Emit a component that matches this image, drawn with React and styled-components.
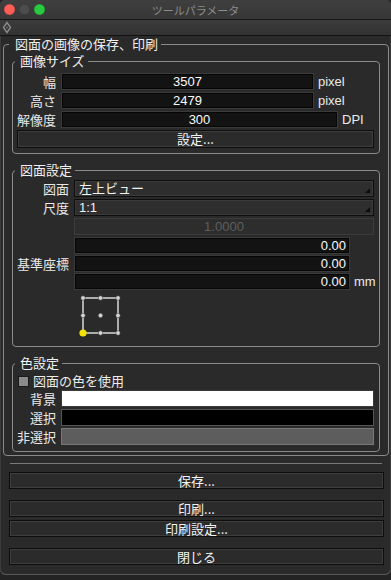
import React from "react";
import styled, { createGlobalStyle } from "styled-components";

const Global = createGlobalStyle`
  html, body { margin: 0; padding: 0; background: #232323; }
  body {
    font-family: "Liberation Sans", "Noto Sans CJK JP", sans-serif;
    font-size: 13px;
    color: #ececec;
  }
  * { box-sizing: border-box; }
`;

const Window = styled.div`
  width: 391px;
  height: 575px;
  background: #2a2a2a;
  border-radius: 5px 5px 6px 6px;
  overflow: hidden;
  display: flex;
  flex-direction: column;
  box-shadow: inset 0 -1px 0 #5a5a5a, inset 1px 0 0 #3a3a3a, inset -1px 0 0 #3a3a3a;
`;

const TitleBar = styled.div`
  height: 20px;
  display: grid;
  grid-template-columns: 1fr auto 1fr;
  align-items: center;
  background: linear-gradient(#3f3f3f, #373737);
  border-bottom: 1px solid #171717;
`;

const Lights = styled.div`
  display: flex;
  gap: 4px;
  padding-left: 4px;
`;

const Light = styled.span`
  width: 11px;
  height: 11px;
  border-radius: 50%;
  background: ${(p) => p.$c};
  box-shadow: inset 0 0 0 0.5px rgba(0, 0, 0, 0.25);
`;

const Title = styled.div`
  font-family: "Noto Sans CJK JP", sans-serif;
  font-size: 11px;
  color: #8d8d8d;
  line-height: 14px;
`;

const ToolStrip = styled.div`
  height: 16px;
  display: flex;
  align-items: center;
  padding-left: 2px;
  background: linear-gradient(#3c3c3c, #323232);
  border-bottom: 1px solid #121212;
`;

const Body = styled.div`
  flex: 1;
  display: flex;
  flex-direction: column;
  padding: 0 2px 0 3px;
`;

const Group = styled.fieldset`
  margin: ${(p) => (p.$mt ? `${p.$mt}px` : 0)} 0 0 0;
  min-width: 0;
  border: 1px solid #8a8a8a;
  border-radius: 4px;
  padding: ${(p) => p.$pad};
  display: flex;
  flex-direction: column;
  gap: ${(p) => p.$gap || 0}px;
`;

const Legend = styled.legend`
  font-family: "Noto Sans CJK JP", sans-serif;
  font-size: 13px;
  line-height: 16px;
  color: #f0f0f0;
  padding: 0 3px 0 ${(p) => p.$pl}px;
  margin-left: ${(p) => -p.$pl + 3}px;
`;

const Row = styled.div`
  display: flex;
  align-items: center;
  gap: 5px;
  height: 17px;
`;

const Label = styled.div`
  width: ${(p) => p.$w}px;
  flex: none;
  text-align: right;
  font-family: "Noto Sans CJK JP", sans-serif;
  font-size: 13px;
  line-height: 16px;
  color: #e8e8e8;
  white-space: nowrap;
`;

const Field = styled.div`
  height: 17px;
  width: ${(p) => (p.$w ? `${p.$w}px` : "auto")};
  flex: ${(p) => (p.$w ? "none" : "1")};
  background: #131313;
  border: 1px solid #3a3a3a;
  box-shadow: inset 0 0 0 1px #060606;
  color: #fafafa;
  font-size: 13px;
  line-height: 15px;
  text-align: ${(p) => p.$align || "center"};
  padding: 0 3px;
`;

const Unit = styled.div`
  font-size: 13px;
  line-height: 15px;
  color: #eaeaea;
  margin-left: -1px;
  grid-column: ${(p) => p.$col || "auto"};
  grid-row: ${(p) => p.$row || "auto"};
`;

const Disabled = styled.div`
  height: 17px;
  flex: 1;
  background: #2d2d2d;
  border: 1px solid #3b3b3b;
  color: #5e5e5e;
  font-size: 13px;
  line-height: 15px;
  text-align: center;
`;

const Select = styled.div`
  position: relative;
  height: 17px;
  flex: 1;
  background: #2e2e2e;
  border: 1px solid #0e0e0e;
  box-shadow: inset 0 0 0 1px #3a3a3a;
  font-family: "Liberation Sans", "Noto Sans CJK JP", sans-serif;
  font-size: 13px;
  line-height: 15px;
  padding-left: 4px;
  color: #f2f2f2;
  &::after {
    content: "";
    position: absolute;
    right: 3px;
    bottom: 3px;
    border-style: solid;
    border-width: 0 0 5px 5px;
    border-color: transparent transparent #0c0c0c transparent;
  }
`;

const Button = styled.button`
  display: block;
  width: 100%;
  height: ${(p) => p.$h || 17}px;
  margin: 0;
  margin-top: ${(p) => p.$mt || 0}px;
  padding: 0;
  background: #2b2b2b;
  border: 1px solid #0d0d0d;
  box-shadow: inset 0 0 0 1px #3d3d3d;
  color: #f2f2f2;
  font-family: "Noto Sans CJK JP", sans-serif;
  font-size: 13px;
  line-height: 14px;
  text-align: center;
`;

const CoordGrid = styled.div`
  display: grid;
  grid-template-columns: 52px 276px auto;
  column-gap: 5px;
  row-gap: 1px;
  align-items: center;
`;

const CoordLabel = styled(Label)`
  grid-row: 1 / span 3;
  grid-column: 1;
`;

const CoordCell = styled(Field)`
  grid-column: 2;
`;

const Diagram = styled.svg`
  display: block;
  margin-left: 57px;
  margin-top: 1px;
`;

const CheckRow = styled.div`
  display: flex;
  align-items: center;
  gap: 4px;
  height: 14px;
  padding-left: 1px;
  margin-top: 3px;
  font-family: "Noto Sans CJK JP", sans-serif;
  font-size: 13px;
  line-height: 14px;
`;

const Check = styled.span`
  width: 11px;
  height: 11px;
  background: #8b8b8b;
  border: 1px solid #1a1a1a;
`;

const Swatch = styled.div`
  height: 17px;
  flex: 1;
  background: ${(p) => p.$bg};
  border: 1px solid ${(p) => p.$bd};
`;

const Footer = styled.div`
  display: flex;
  flex-direction: column;
  padding: 0 5px 0 6px;
`;

const Separator = styled.div`
  height: 1px;
  background: #7a7a7a;
  margin: 7px 2px 8px 1px;
`;

const Spacer = styled.div`
  height: ${(p) => p.$h}px;
`;

function Diamond() {
  return (
    <svg width="10" height="13" viewBox="0 0 10 13">
      <path d="M5 1.5 L8.5 6.5 L5 11.5 L1.5 6.5 Z" fill="none" stroke="#8a8a8a" strokeWidth="1.4" />
      <circle cx="5" cy="6.5" r="1" fill="#6a6a6a" />
    </svg>
  );
}

function AnchorDiagram() {
  const xs = [9, 26.5, 44];
  const ys = [5, 22.5, 40];
  const dots = [];
  ys.forEach((y) =>
    xs.forEach((x) => {
      if (!(x === 9 && y === 40)) dots.push([x, y]);
    })
  );
  return (
    <Diagram width="52" height="47" viewBox="0 0 52 47">
      <rect x="9" y="5" width="35" height="35" fill="none" stroke="#f4f4f4" strokeWidth="1.3" />
      {dots.map(([x, y]) => (
        <circle key={`${x}-${y}`} cx={x} cy={y} r="2.2" fill="#d8d8d8" stroke="#444" strokeWidth="0.6" />
      ))}
      <circle cx="9" cy="40" r="3.6" fill="#f5e400" />
    </Diagram>
  );
}

export default function App() {
  return (
    <>
      <Global />
      <Window>
        <TitleBar>
          <Lights>
            <Light $c="#fd5f57" />
            <Light $c="#4c4c4c" />
            <Light $c="#29c940" />
          </Lights>
          <Title>ツールパラメータ</Title>
          <div />
        </TitleBar>
        <ToolStrip>
          <Diamond />
        </ToolStrip>
        <Body>
          <Group $pad="1px 8px 3px 8px">
            <Legend $pl={6}>図面の画像の保存、印刷</Legend>

            <Group $pad="4px 5px 5px 4px" $gap={2}>
              <Legend $pl={5}>画像サイズ</Legend>
              <Row>
                <Label $w={39}>幅</Label>
                <Field $w={253}>3507</Field>
                <Unit>pixel</Unit>
              </Row>
              <Row>
                <Label $w={39}>高さ</Label>
                <Field $w={253}>2479</Field>
                <Unit>pixel</Unit>
              </Row>
              <Row>
                <Label $w={39}>解像度</Label>
                <Field $w={277}>300</Field>
                <Unit>DPI</Unit>
              </Row>
              <Button $h={18}>設定...</Button>
            </Group>

            <Group $mt={8} $pad="2px 5px 6px 4px" $gap={2}>
              <Legend $pl={5}>図面設定</Legend>
              <Row>
                <Label $w={52}>図面</Label>
                <Select>左上ビュー</Select>
              </Row>
              <Row>
                <Label $w={52}>尺度</Label>
                <Select>1:1</Select>
              </Row>
              <Row>
                <Label $w={52} />
                <Disabled>1.0000</Disabled>
              </Row>
              <CoordGrid>
                <CoordLabel $w={52}>基準座標</CoordLabel>
                <CoordCell $align="right">0.00</CoordCell>
                <CoordCell $align="right">0.00</CoordCell>
                <CoordCell $align="right">0.00</CoordCell>
                <Unit $col={3} $row={3}>mm</Unit>
              </CoordGrid>
              <AnchorDiagram />
            </Group>

            <Group $mt={8} $pad="0 5px 6px 4px" $gap={2}>
              <Legend $pl={5}>色設定</Legend>
              <CheckRow>
                <Check />
                <span>図面の色を使用</span>
              </CheckRow>
              <Row>
                <Label $w={39}>背景</Label>
                <Swatch $bg="#ffffff" $bd="#3a3a3a" />
              </Row>
              <Row>
                <Label $w={39}>選択</Label>
                <Swatch $bg="#000000" $bd="#555555" />
              </Row>
              <Row>
                <Label $w={39}>非選択</Label>
                <Swatch $bg="#5d5d5d" $bd="#777777" />
              </Row>
            </Group>
          </Group>

          <Footer>
            <Separator />
            <Button>保存...</Button>
            <Spacer $h={11} />
            <Button>印刷...</Button>
            <Button $mt={3}>印刷設定...</Button>
            <Spacer $h={11} />
            <Button>閉じる</Button>
          </Footer>
        </Body>
      </Window>
    </>
  );
}
